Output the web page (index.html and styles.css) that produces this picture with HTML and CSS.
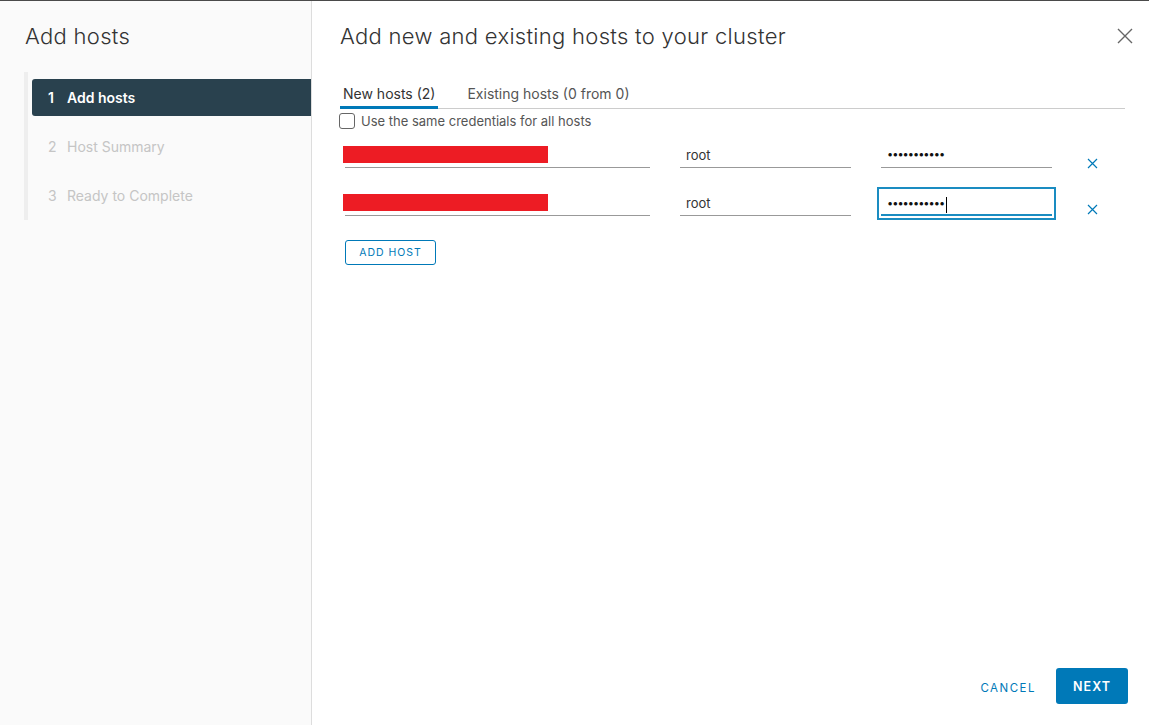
FILE: index.html
```html
<!DOCTYPE html>
<html lang="en">

<head>
    <meta charset="UTF-8">
    <title>Add hosts</title>
    <link rel="stylesheet" href="styles.css">
</head>

<body>
    <div class="wizard">

        <aside class="sidebar">
            <h1>Add hosts</h1>
            <ul class="steps">
                <li class="step active"><span class="num">1</span>Add hosts</li>
                <li class="step"><span class="num">2</span>Host Summary</li>
                <li class="step"><span class="num">3</span>Ready to Complete</li>
            </ul>
        </aside>

        <main class="content">
            <header class="head">
                <h2>Add new and existing hosts to your cluster</h2>
                <button class="close" aria-label="Close">
                    <svg width="16" height="16" viewBox="0 0 16 16">
                        <path d="M1 1 L15 15 M15 1 L1 15" stroke="#666" stroke-width="1.4" fill="none" />
                    </svg>
                </button>
            </header>

            <nav class="tabs">
                <span class="tab selected">New hosts (2)</span>
                <span class="tab">Existing hosts (0 from 0)</span>
            </nav>

            <label class="check">
                <span class="box"></span>
                Use the same credentials for all hosts
            </label>

            <div class="rows">
                <div class="row">
                    <div class="field host"><span class="redact"></span></div>
                    <div class="field">root</div>
                    <div class="field pass">•••••••••••</div>
                    <button class="remove" aria-label="Remove">
                        <svg width="11" height="11" viewBox="0 0 11 11">
                            <path d="M1 1 L10 10 M10 1 L1 10" stroke="#0079b8" stroke-width="1.2" fill="none" />
                        </svg>
                    </button>
                </div>
                <div class="row">
                    <div class="field host"><span class="redact"></span></div>
                    <div class="field">root</div>
                    <div class="focus">
                        <div class="field pass">•••••••••••<span class="caret"></span></div>
                    </div>
                    <button class="remove" aria-label="Remove">
                        <svg width="11" height="11" viewBox="0 0 11 11">
                            <path d="M1 1 L10 10 M10 1 L1 10" stroke="#0079b8" stroke-width="1.2" fill="none" />
                        </svg>
                    </button>
                </div>
            </div>

            <button class="outline">ADD HOST</button>

            <footer class="foot">
                <button class="link">CANCEL</button>
                <button class="primary">NEXT</button>
            </footer>
        </main>

    </div>
</body>

</html>
```

FILE: styles.css
```css
* {
    box-sizing: border-box;
}

body {
    margin: 0;
    font-family: Inter, Lato, sans-serif;
    color: #333;
    background: #fff;
}

button {
    font-family: Inter, Lato, sans-serif;
}

.wizard {
    display: flex;
    height: 725px;
    border-top: 1px solid #4a4a4a;
}

.sidebar {
    width: 312px;
    flex-shrink: 0;
    background: #fafafa;
    border-right: 1px solid #ddd;
    padding: 20px 0 0 24px;
}

.sidebar h1 {
    margin: 0;
    font-size: 22px;
    font-weight: 300;
    letter-spacing: 0.3px;
    line-height: 30px;
    color: #333;
    padding-left: 1px;
}

.steps {
    list-style: none;
    margin: 21px 0 0;
    padding: 7px 0 0 4px;
    border-left: 4px solid #eee;
    height: 148px;
}

.step {
    height: 37px;
    margin-bottom: 12px;
    padding-left: 16px;
    display: flex;
    align-items: center;
    font-size: 14px;
    color: #c5c5c5;
}

.step .num {
    width: 19px;
}

.step.active {
    background: #29414e;
    color: #fff;
    font-weight: 600;
    border-radius: 3px 0 0 3px;
}

.content {
    flex: 1;
    position: relative;
    padding: 21px 24px 0 28px;
}

.head {
    display: flex;
    justify-content: space-between;
    align-items: center;
}

.head h2 {
    margin: 0;
    font-size: 22px;
    font-weight: 300;
    letter-spacing: 0.3px;
    line-height: 28px;
    color: #333;
}

.close {
    border: 0;
    background: none;
    padding: 0;
    margin: 0 -8px 0 0;
    width: 16px;
    height: 16px;
}

.tabs {
    display: flex;
    margin-top: 35px;
    border-bottom: 1px solid #ccc;
}

.tab {
    font-size: 14px;
    color: #555;
    padding: 0 3px 5px;
    margin-right: 26px;
    line-height: 18px;
}

.tab.selected {
    color: #333;
    border-bottom: 3px solid #0079b8;
    margin-bottom: -1px;
    padding-bottom: 3px;
}

.check {
    display: flex;
    align-items: center;
    gap: 6px;
    font-size: 13px;
    color: #555;
    margin-top: 4px;
    margin-left: -1px;
}

.box {
    width: 16px;
    height: 16px;
    border: 1px solid #666;
    border-radius: 3px;
    background: #fff;
}

.rows {
    margin-top: 9px;
    display: flex;
    flex-direction: column;
    gap: 18px;
}

.row {
    display: flex;
    align-items: flex-end;
}

.field {
    height: 30px;
    border-bottom: 1px solid #999;
    font-size: 13px;
    color: #333;
    padding: 0 6px 4px;
    display: flex;
    align-items: flex-end;
    width: 171px;
    margin-left: 30px;
}

.field.host {
    width: 305px;
    margin-left: 5px;
    padding: 0 0 4px;
}

.redact {
    display: block;
    width: 205px;
    height: 17px;
    background: #ed1c24;
    margin-left: -2px;
}

.field.pass {
    letter-spacing: -1px;
    font-size: 11px;
    color: #111;
    padding-bottom: 6px;
}

.focus {
    margin-left: 26px;
    border: 2px solid #1a8cc1;
    padding: 0 2px 2px;
    margin-bottom: -4px;
}

.focus .field {
    margin-left: 0;
    border-bottom: 2px solid #1a8cc1;
    height: 27px;
    padding-bottom: 4px;
}

.caret {
    display: inline-block;
    width: 1px;
    height: 16px;
    background: #000;
    margin-left: 2px;
    margin-bottom: -3px;
}

.remove {
    border: 0;
    background: none;
    padding: 0;
    width: 11px;
    height: 11px;
    margin-left: 35px;
    margin-bottom: 1px;
}

.focus + .remove {
    margin-left: 31px;
    margin-bottom: 3px;
}

.outline {
    margin: 24px 0 0 5px;
    height: 25px;
    width: 91px;
    border: 1px solid #0079b8;
    border-radius: 3px;
    background: #fff;
    color: #0079b8;
    font-size: 10.5px;
    letter-spacing: 1px;
    padding: 0;
}

.foot {
    position: absolute;
    right: 21px;
    bottom: 21px;
    display: flex;
    align-items: center;
    gap: 20px;
}

.link {
    border: 0;
    background: none;
    color: #0079b8;
    font-size: 11.5px;
    letter-spacing: 1.5px;
    padding: 0;
    margin-top: 3px;
}

.primary {
    width: 72px;
    height: 36px;
    border: 0;
    border-radius: 3px;
    background: #0079b8;
    color: #fff;
    font-size: 12.5px;
    font-weight: 600;
    letter-spacing: 1px;
}
```
